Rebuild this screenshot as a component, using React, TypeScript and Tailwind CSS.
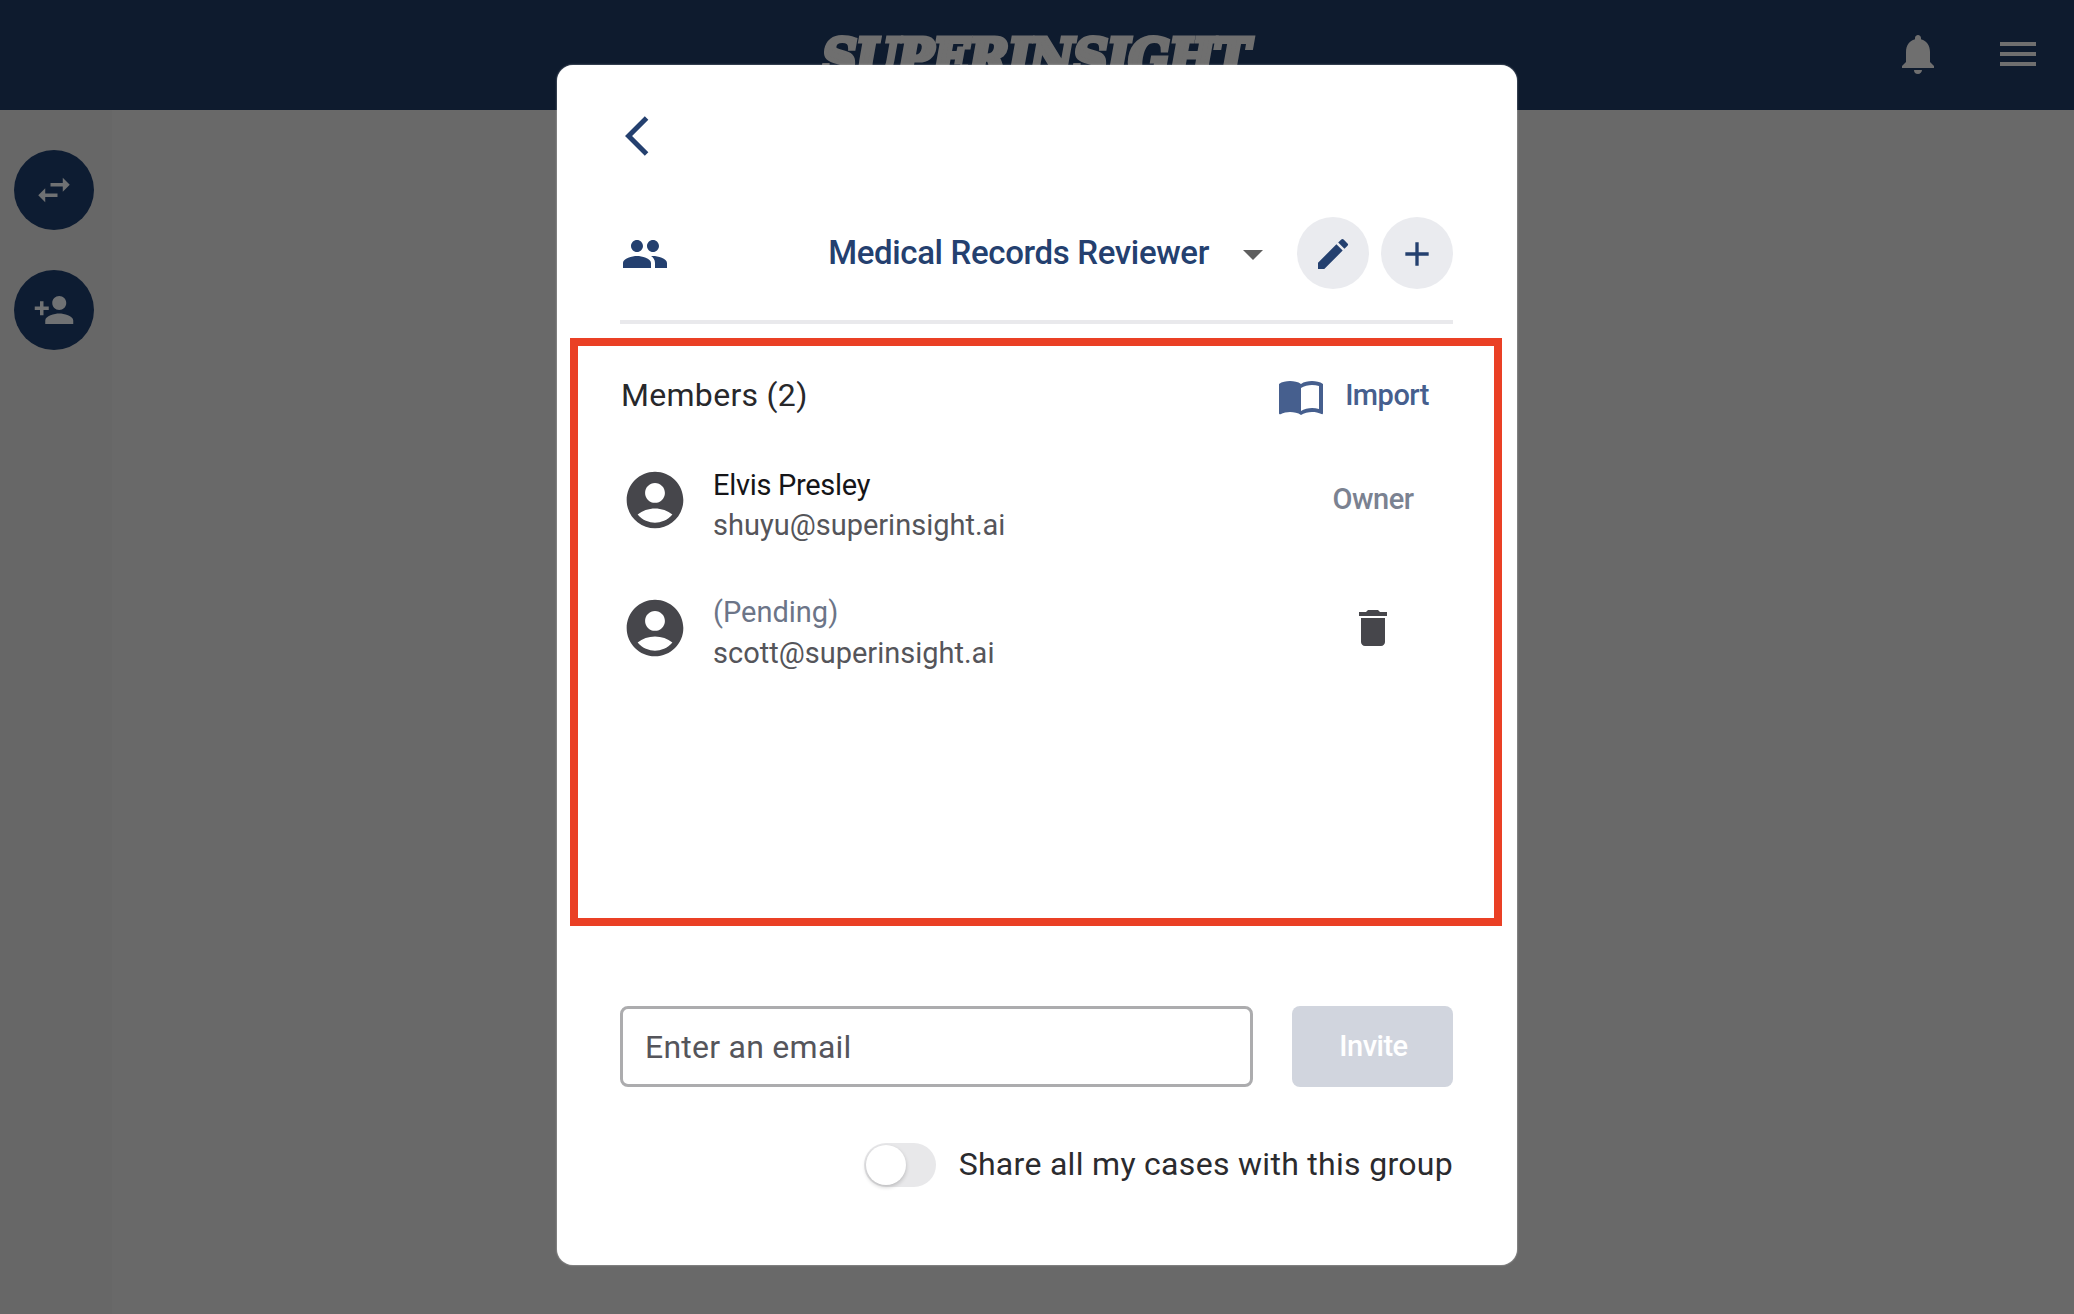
import type { ReactNode } from "react";
import {
  MdAdd,
  MdArrowBackIos,
  MdArrowDropDown,
  MdDelete,
  MdEdit,
  MdImportContacts,
  MdMenu,
  MdNotifications,
  MdPeople,
  MdPersonAdd,
  MdSwapHoriz,
} from "react-icons/md";

function AccountCircle() {
  return (
    <svg viewBox="0 0 24 24" className="size-[68px] shrink-0 fill-[#46464b]">
      <path d="M12 2C6.48 2 2 6.48 2 12s4.48 10 10 10 10-4.48 10-10S17.52 2 12 2zm0 4c1.93 0 3.5 1.57 3.5 3.5S13.93 13 12 13s-3.5-1.57-3.5-3.5S10.07 6 12 6zm0 14c-2.03 0-4.43-.82-6.14-2.88C7.55 15.8 9.68 15 12 15s4.45.8 6.14 2.12C16.43 19.18 14.03 20 12 20z" />
    </svg>
  );
}

function Header() {
  return (
    <header className="flex h-[110px] shrink-0 items-center justify-between bg-[#0e1b2e] pr-8 pb-0.5 text-[#6f6f6f]">
      <div className="w-[148px]" />
      <div className="flex w-[438px] translate-x-[14px] justify-center pt-2">
        <span className="origin-center scale-x-[0.93] font-['DejaVu_Serif'] text-[52px] leading-none font-bold tracking-[-1px] whitespace-nowrap italic [-webkit-text-stroke:5px_#6f6f6f]">
          SUPERINSIGHT
        </span>
      </div>
      <div className="flex gap-[52px]">
        <MdNotifications className="size-12" />
        <MdMenu className="size-12" />
      </div>
    </header>
  );
}

function RailButton({ children }: { children: ReactNode }) {
  return (
    <button className="flex size-20 items-center justify-center rounded-full bg-[#0d1c32] text-[#6f7173]">{children}</button>
  );
}

function Member({ name, email, pending, action }: { name: string; email: string; pending?: boolean; action: ReactNode }) {
  return (
    <div className="flex h-32 items-center">
      <AccountCircle />
      <div className="ml-[24px] flex-1 pt-[10px] text-[29px]">
        <div className={pending ? "leading-[41px] text-[#6c7588]" : "leading-[40px] tracking-[-0.3px] text-[#151518]"}>{name}</div>
        <div className="leading-[41px] text-[#55555a]">{email}</div>
      </div>
      <div className="flex w-[162px] justify-center">{action}</div>
    </div>
  );
}

function Dialog() {
  return (
    <section className="flex h-[1200px] w-[960px] flex-col rounded-2xl bg-white pt-[47px] pr-16 pl-[63px] shadow-[0_0_2px_rgba(255,255,255,0.6)]">
      <button className="ml-[5px] size-12 text-[#24406f]">
        <MdArrowBackIos className="size-12" />
      </button>

      <div className="mt-[57px] flex h-[72px] items-center text-[#24406f]">
        <MdPeople className="mt-px ml-px size-12" />
        <div className="mr-[56px] flex-1 text-right text-[33px] font-medium tracking-[-0.35px]">Medical Records Reviewer</div>
        <MdArrowDropDown className="mt-px -ml-[36px] size-12 text-[#5f5f5f]" />
        <div className="ml-5 flex gap-3">
          <button className="flex size-[72px] items-center justify-center rounded-full bg-[#eaebef] pt-px">
            <MdEdit className="size-10" />
          </button>
          <button className="flex size-[72px] items-center justify-center rounded-full bg-[#eaebef] pt-px">
            <MdAdd className="size-10" />
          </button>
        </div>
      </div>

      <div className="mt-[31px] h-1 shrink-0 bg-[#e9e9ec]" />

      <div className="-mr-[49px] -ml-[50px] mt-[14px] h-[588px] shrink-0 border-8 border-[#ea4025] pr-10 pl-[43px]">
        <div className="mt-[26px] flex h-12 items-center justify-between">
          <h2 className="pb-[3px] text-[32px] tracking-[0.3px] text-[#28282b]">Members (2)</h2>
          <button className="mr-[25px] flex items-center gap-5 text-[29px] font-medium tracking-[-0.5px] text-[#465f8e]">
            <MdImportContacts className="size-12" />
            Import
          </button>
        </div>
        <div className="mt-4">
          <Member
            name="Elvis Presley"
            email="shuyu@superinsight.ai"
            action={<span className="text-[29px] font-medium tracking-[-0.5px] text-[#7b8291]">Owner</span>}
          />
          <Member name="(Pending)" email="scott@superinsight.ai" pending action={<MdDelete className="size-12 text-[#46464b]" />} />
        </div>
      </div>

      <div className="mt-20 flex h-[81px] shrink-0 justify-between">
        <input
          placeholder="Enter an email"
          className="w-[633px] rounded-lg border-[3px] border-[#acacae] px-[22px] text-[32px] tracking-[0.25px] placeholder:text-[#55555b]"
        />
        <button className="w-[161px] rounded-lg bg-[#d1d5de] pl-0.5 text-[29px] font-medium tracking-[-0.5px] text-white">Invite</button>
      </div>

      <div className="mt-14 flex h-11 items-center justify-end gap-[23px]">
        <div className="flex h-11 w-[72px] items-center rounded-full bg-[#e8e8ea] px-0.5">
          <div className="size-10 rounded-full bg-white shadow-[0_2px_4px_rgba(0,0,0,0.2)]" />
        </div>
        <span className="pb-[3px] text-[32px] tracking-[0.3px] text-[#2b2b2e]">Share all my cases with this group</span>
      </div>
    </section>
  );
}

export default function App() {
  return (
    <div className="relative flex h-[1314px] w-[2074px] flex-col overflow-hidden bg-[#696969] font-[Roboto,sans-serif]">
      <Header />
      <nav className="flex w-28 flex-1 flex-col items-center gap-10 bg-[#676767] pt-10 pr-1">
        <RailButton>
          <MdSwapHoriz className="size-[42px]" />
        </RailButton>
        <RailButton>
          <MdPersonAdd className="size-[42px]" />
        </RailButton>
      </nav>
      <div className="absolute inset-0 flex justify-center pt-[65px]">
        <Dialog />
      </div>
    </div>
  );
}
